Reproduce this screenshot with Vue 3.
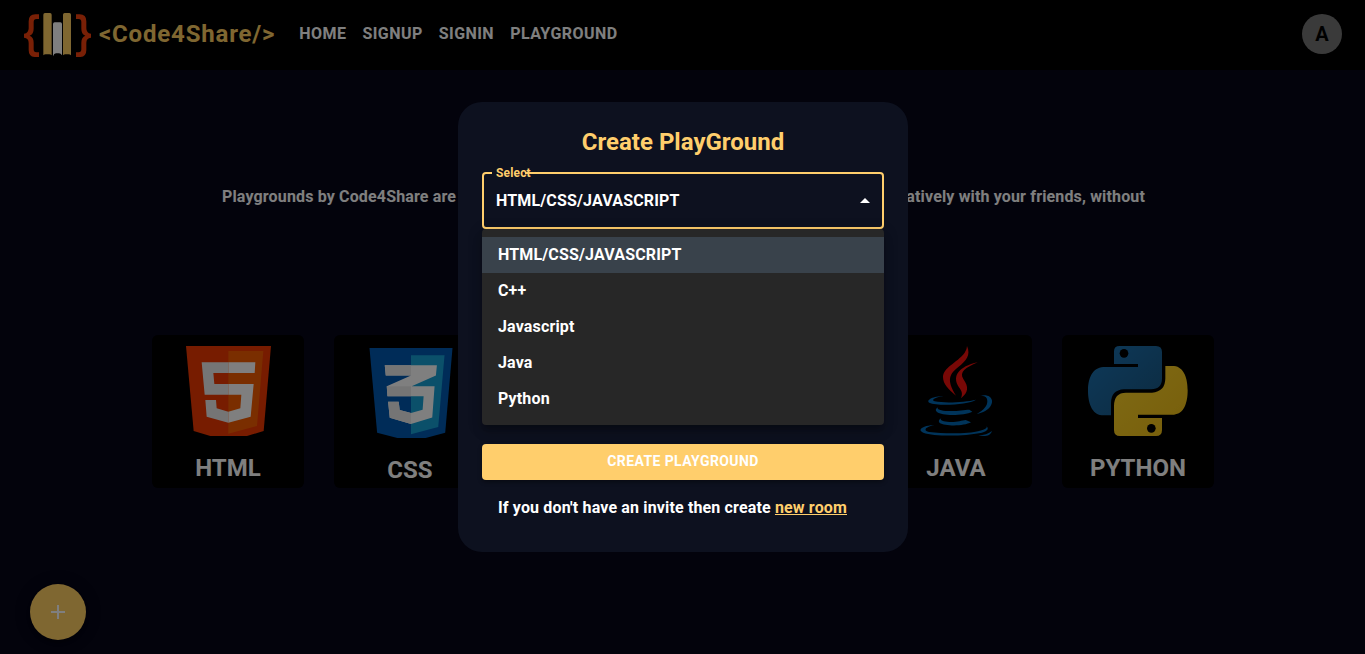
<script setup>
const links = ['HOME', 'SIGNUP', 'SIGNIN', 'PLAYGROUND']
const cards = ['HTML', 'CSS', '', '', 'JAVA', 'PYTHON']
const options = ['HTML/CSS/JAVASCRIPT', 'C++', 'Javascript', 'Java', 'Python']
</script>

<template>
  <div class="page">
    <header class="bar">
      <svg class="logo" viewBox="72 38 201 133">
        <g fill="#f2400c">
          <path d="M117 42V56H109Q101 56 101 65V85Q101 101 89 106Q101 111 101 127V147Q101 156 109 156H117V170H106Q86 170 86 149V128Q86 113 72 112V100Q86 99 86 84V63Q86 42 106 42z" />
          <path d="M228 42V56H236Q244 56 244 65V85Q244 101 256 106Q244 111 244 127V147Q244 156 236 156H228V170H239Q259 170 259 149V128Q259 113 273 112V100Q259 99 259 84V63Q259 42 239 42z" />
        </g>
        <path fill="#ffce63" d="M130 165V43q0-5 5-5h15q5 0 5 5v122q-3-3-7-3h-11q-4 0-7 3zM189 165V43q0-5 5-5h14q5 0 5 5v122q-3-3-7-3h-10q-4 0-7 3z" />
        <path fill="#fff" d="M159 168V71q0-5 5-5h17q5 0 5 5v94q-4-6-9-6h-9q-6 0-9 9z" />
      </svg>
      <span class="brand">&lt;Code4Share/&gt;</span>
      <nav><a v-for="l in links" :key="l">{{ l }}</a></nav>
      <span class="avatar">A</span>
    </header>

    <p class="intro"><span>Playgrounds by Code4Share are</span><span>collaboratively with your friends, without</span></p>

    <div class="cards">
      <div v-for="(c, i) in cards" :key="i" class="card" :class="c.toLowerCase()">
        <svg v-if="c === 'HTML'" width="85" height="90" viewBox="137 63 255 270">
          <path fill="#ee3800" d="M137 63H392L370 318 320 333H210L160 318z" />
          <path fill="#f45c00" d="M264 78H369L350 303 264 326z" />
          <path fill="#ebebeb" d="M184 112H264V144H219L222 177H264V209H193zM195 225H227L229 250 264 260V293L199 275z" />
          <path fill="#fff" d="M264 112H345L343 144H264zM264 177H340L331 275 264 293V260L300 250 303 209H264z" />
        </svg>
        <svg v-else-if="c === 'CSS'" width="84" height="90" viewBox="131 68 250 271">
          <path fill="#0058b0" d="M131 68H381L359 323 300 339H215L154 323z" />
          <path fill="#16a0d4" d="M256 90H357L338 306 256 328z" />
          <path fill="#fff" d="M177 120H334L331 151 258 183H327L320 277 256 297 192 278 187 230H219L222 255 256 264 291 254 294 213H185L183 183 256 151H180z" />
          <path fill="#ebebeb" d="M177 120H256V151H180zM183 183H256V213H185zM187 230H219L222 255 256 264V297L192 278z" />
        </svg>
        <svg v-else-if="c === 'JAVA'" width="72" height="90" viewBox="75 63 216 270">
          <path fill="#f0100c" d="M216 63C228 91 214 107 190 126C165 146 152 163 183 212C160 194 144 176 144 157C144 126 185 115 209 83Q216 74 216 63zM248 112C211 128 192 142 205 162C222 186 220 202 198 220C205 202 198 196 189 182C173 153 190 125 248 112z" />
          <g fill="#0068b5">
            <path d="M145 213C119 217 107 225 119 229C149 235 211 232 243 224C219 240 127 244 103 233C91 225 117 213 145 213z" />
            <path d="M255 212C284 205 298 222 288 241C281 255 263 264 245 267C267 255 277 243 277 229C277 215 268 212 255 212z" />
            <path d="M130 246C121 253 140 258 158 258C189 259 206 254 223 254L232 260C207 272 143 274 126 261Q117 253 130 246z" />
            <path d="M139 280C132 287 147 290 163 291C187 292 200 286 212 285L228 292C207 304 151 304 134 294Q127 286 139 280z" />
            <path d="M119 301C91 305 83 317 102 321C151 327 224 326 252 318C272 313 278 309 274 303C285 313 273 320 256 324C208 334 117 335 85 323C61 313 93 299 119 301z" />
            <path d="M291 318C286 334 268 335 250 331C267 331 281 326 291 318z" />
          </g>
        </svg>
        <svg v-else-if="c === 'PYTHON'" width="100" height="90" viewBox="114 63 300 270">
          <defs>
            <linearGradient id="pyBlue" x1="0" y1="0" x2="1" y2="1"><stop offset="0" stop-color="#1b74b5" /><stop offset="1" stop-color="#195580" /></linearGradient>
            <linearGradient id="pyGold" x1="0" y1="0" x2="1" y2="1"><stop offset="0" stop-color="#ffd52a" /><stop offset="1" stop-color="#efbd16" /></linearGradient>
          </defs>
          <path fill="url(#pyBlue)" d="M192 115V79Q192 63 209 63H318Q336 63 336 81V160Q336 193 303 193H222Q183 195 183 235V271H155C126 268 114 234 114 198C114 160 127 128 160 126H264V117H192z" />
          <path fill="url(#pyGold)" d="M346 123H372C403 126 413 162 413 196C413 234 402 267 372 269H264V279H336V315Q336 333 318 333H210Q192 333 192 315V243Q192 203 228 203H306Q346 200 346 160z" />
          <circle cx="222" cy="85" r="13" /><circle cx="304" cy="310" r="13" />
        </svg>
        <span>{{ c }}</span>
      </div>
    </div>

    <button class="fab"><svg width="24" height="24" viewBox="0 0 24 24"><path fill="#fff" d="M19 13h-6v6h-2v-6H5v-2h6V5h2v6h6z" /></svg></button>

    <div class="backdrop">
      <section class="dialog">
        <h2>Create PlayGround</h2>
        <fieldset class="select">
          <legend></legend>
          <span class="label">Select</span>
          <span>HTML/CSS/JAVASCRIPT</span>
          <svg width="24" height="24" viewBox="0 0 24 24"><path fill="#fff" d="M7 14l5-5 5 5z" /></svg>
        </fieldset>
        <ul class="menu">
          <li v-for="(o, i) in options" :key="o" :class="{ on: i === 0 }">{{ o }}</li>
        </ul>
        <button class="create">CREATE PLAYGROUND</button>
        <p class="hint">If you don't have an invite then create <a>new room</a></p>
      </section>
    </div>
  </div>
</template>

<style>
body { background: #03030c; overflow: hidden; }
</style>
<style scoped>
* { box-sizing: border-box; }
.page { position: relative; height: 654px; overflow: hidden; background: #060618; color: #fff; font: 700 16px/24px Roboto, sans-serif; letter-spacing: 0.15px; }
.bar { display: flex; align-items: center; height: 70px; padding: 0 23px 2px 24px; background: #000; }
.logo { width: 67px; height: 44.4px; margin-top: 2px; }
.brand { margin-left: 8px; color: #ffce63; font-size: 24px; letter-spacing: 0.82px; }
nav { display: flex; gap: 16px; margin-left: 24px; letter-spacing: 0.45px; }
.avatar { width: 40px; height: 40px; margin-left: auto; border-radius: 50%; background: #757575; color: #000; font-size: 20px; line-height: 41px; text-align: center; }
.intro { display: flex; justify-content: space-between; width: 923px; margin: 115px 0 0 222px; }
.cards { display: flex; gap: 30px; width: 1062px; margin: 126px auto 0; }
.card { display: flex; flex-direction: column; align-items: center; width: 152px; height: 153px; padding-top: 11px; border-radius: 6px; background: #000; font-size: 24px; line-height: 32px; letter-spacing: 0; }
.card span { margin: 16px 0 0 1px; }
.html svg { margin-left: 1px; }
.css { padding-top: 13px; }
.css svg { margin-left: 2px; }
.fab { position: absolute; left: 30px; top: 584px; display: grid; place-items: center; width: 56px; height: 56px; padding: 0; border: 0; border-radius: 50%; background: #ffce63; box-shadow: 0 3px 5px -1px #0003, 0 6px 10px #0002, 0 1px 18px #0002; }
.backdrop { position: absolute; inset: 0; padding: 102px 0 0 1px; background: rgba(0, 0, 0, 0.5); }
.dialog { position: relative; width: 450px; height: 450px; margin: 0 auto; padding: 24px; border-radius: 24px; background: #0d111f; }
h2 { margin: 0; color: #ffce6c; font-size: 24px; line-height: 32px; letter-spacing: 0; text-align: center; }
.select { position: relative; display: flex; align-items: center; justify-content: space-between; height: 62px; margin: 9px 0 0; padding: 0 5px 4px 12px; border: 2px solid #ffce6c; border-radius: 4px; }
.select legend { width: 33px; height: 11px; margin-left: -4px; padding: 0; }
.label { position: absolute; left: 12px; top: -13px; color: #ffce6c; font-size: 12px; line-height: 16px; }
.menu { position: absolute; left: 24px; top: 127px; width: 402px; height: 196px; margin: 0; padding: 8px 0; border-radius: 4px; background: #272727; list-style: none; box-shadow: 0 5px 5px -3px #0003, 0 8px 10px 1px #0002, 0 3px 14px 2px #0002; }
.menu li { height: 36px; padding: 0 16px; line-height: 35px; }
.on { background: #39424b; }
.create { position: absolute; left: 24px; top: 342px; width: 402px; height: 36px; padding: 0 0 2px; border: 0; border-radius: 4px; background: #ffce6c; color: #fff; font: 700 14px/32px Roboto, sans-serif; letter-spacing: 0.4px; box-shadow: 0 2px 4px #0006; }
.hint { position: absolute; left: 40px; top: 394px; margin: 0; white-space: nowrap; }
.hint a { color: #ffce6c; text-decoration: underline; }
</style>
